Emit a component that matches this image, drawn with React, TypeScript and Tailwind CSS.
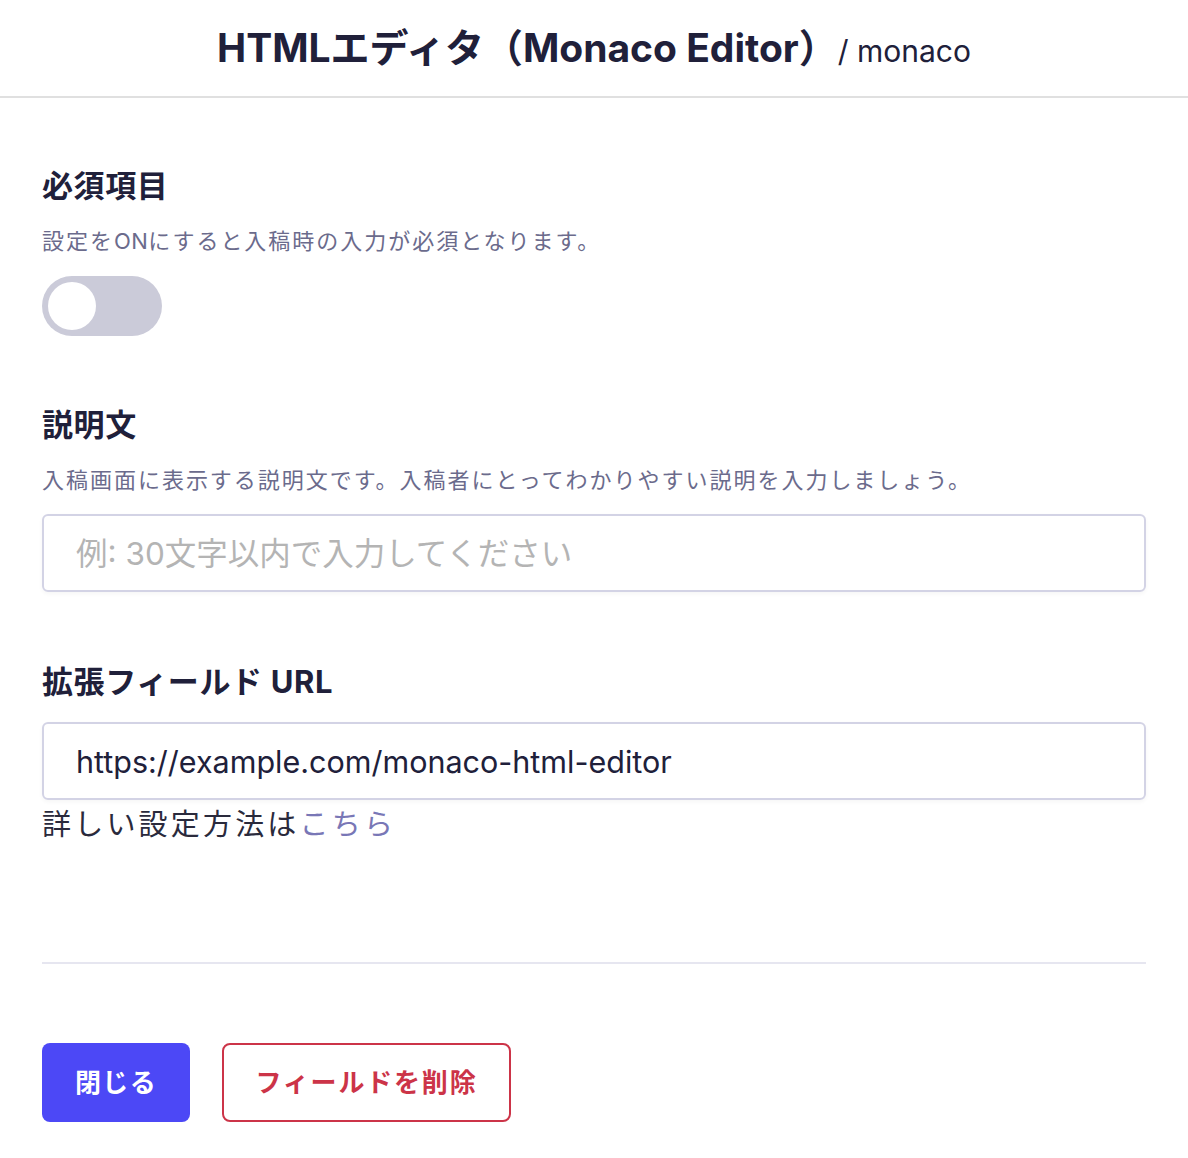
import { useState } from "react";

const font = "font-['Inter','Noto_Sans_CJK_JP',sans-serif]";

function Toggle({ on, onChange }: { on: boolean; onChange: (v: boolean) => void }) {
  return (
    <button
      type="button"
      onClick={() => onChange(!on)}
      className={`flex h-[60px] w-[120px] items-center rounded-full p-[6px] transition-colors ${
        on ? "bg-[#4f48f6]" : "bg-[#cbcbd9]"
      }`}
    >
      <span
        className={`block h-[48px] w-[48px] rounded-full bg-white transition-transform ${
          on ? "translate-x-[60px]" : "translate-x-0"
        }`}
      />
    </button>
  );
}

export default function App() {
  const [required, setRequired] = useState(false);
  const [description, setDescription] = useState("");
  const [url, setUrl] = useState("https://example.com/monaco-html-editor");

  return (
    <div className={`${font} min-h-screen bg-white text-[#20203a]`}>
      {/* ── Header ── */}
      <header className="flex h-[98px] items-center justify-center border-b-2 border-[#e0e0e0] pb-[2px]">
        <h1 className="text-[39px] font-bold leading-none">
          HTMLエディタ（Monaco Editor）
          <span className="text-[30px] font-normal">/ monaco</span>
        </h1>
      </header>

      <div className="px-[42px]">
        {/* ── 必須項目 ── */}
        <section className="pt-[68px]">
          <h2 className="text-[31px] font-bold leading-[40px] tracking-[0.02em]">必須項目</h2>
          <p className="mt-[20px] text-[22px] leading-[30px] tracking-[0.09em] text-[#6b6b8c]">
            設定を<span className="tracking-[0.02em]">ON</span>にすると入稿時の入力が必須となります。
          </p>
          <div className="mt-[20px]">
            <Toggle on={required} onChange={setRequired} />
          </div>
        </section>

        {/* ── 説明文 ── */}
        <section className="pt-[69px]">
          <h2 className="text-[31px] font-bold leading-[40px] tracking-[0.02em]">説明文</h2>
          <p className="mt-[20px] text-[22px] leading-[30px] tracking-[0.09em] text-[#6b6b8c]">
            入稿画面に表示する説明文です。入稿者にとってわかりやすい説明を入力しましょう。
          </p>
          <input
            value={description}
            onChange={(e) => setDescription(e.target.value)}
            placeholder="例: 30文字以内で入力してください"
            className="mt-[19px] block h-[78px] w-full rounded-[6px] border-2 border-[#d3d3e5] px-[32px] text-[30.5px] text-[#20203a] shadow-[0_2px_4px_rgba(0,0,0,0.04)] outline-none placeholder:text-[31.5px] placeholder:text-[#b4b4b4]"
          />
        </section>

        {/* ── 拡張フィールド URL ── */}
        <section className="pt-[70px]">
          <h2 className="text-[31px] font-bold leading-[40px] tracking-[0.02em]">拡張フィールド URL</h2>
          <input
            value={url}
            onChange={(e) => setUrl(e.target.value)}
            className="mt-[20px] block h-[78px] w-full rounded-[6px] border-2 border-[#d3d3e5] px-[32px] text-[30.5px] text-[#20203a] shadow-[0_2px_4px_rgba(0,0,0,0.04)] outline-none"
          />
          <p className="mt-[4px] text-[29px] leading-[42px] tracking-[0.11em] text-[#2a2a3c]">
            詳しい設定方法は
            <a href="#" className="text-[#7977b6]">
              こちら
            </a>
          </p>
        </section>

        {/* ── Footer ── */}
        <div className="mt-[116px] border-t-2 border-[#e6e6f0]" />
        <div className="flex gap-[32px] pb-[36px] pt-[79px]">
          <button className="h-[79px] w-[148px] rounded-[8px] bg-[#4c48f6] text-[26px] font-bold tracking-[0.05em] text-white">
            閉じる
          </button>
          <button className="h-[79px] w-[289px] rounded-[8px] border-2 border-[#cc3448] text-[26px] font-bold tracking-[0.07em] text-[#cc3448]">
            フィールドを削除
          </button>
        </div>
      </div>
    </div>
  );
}
